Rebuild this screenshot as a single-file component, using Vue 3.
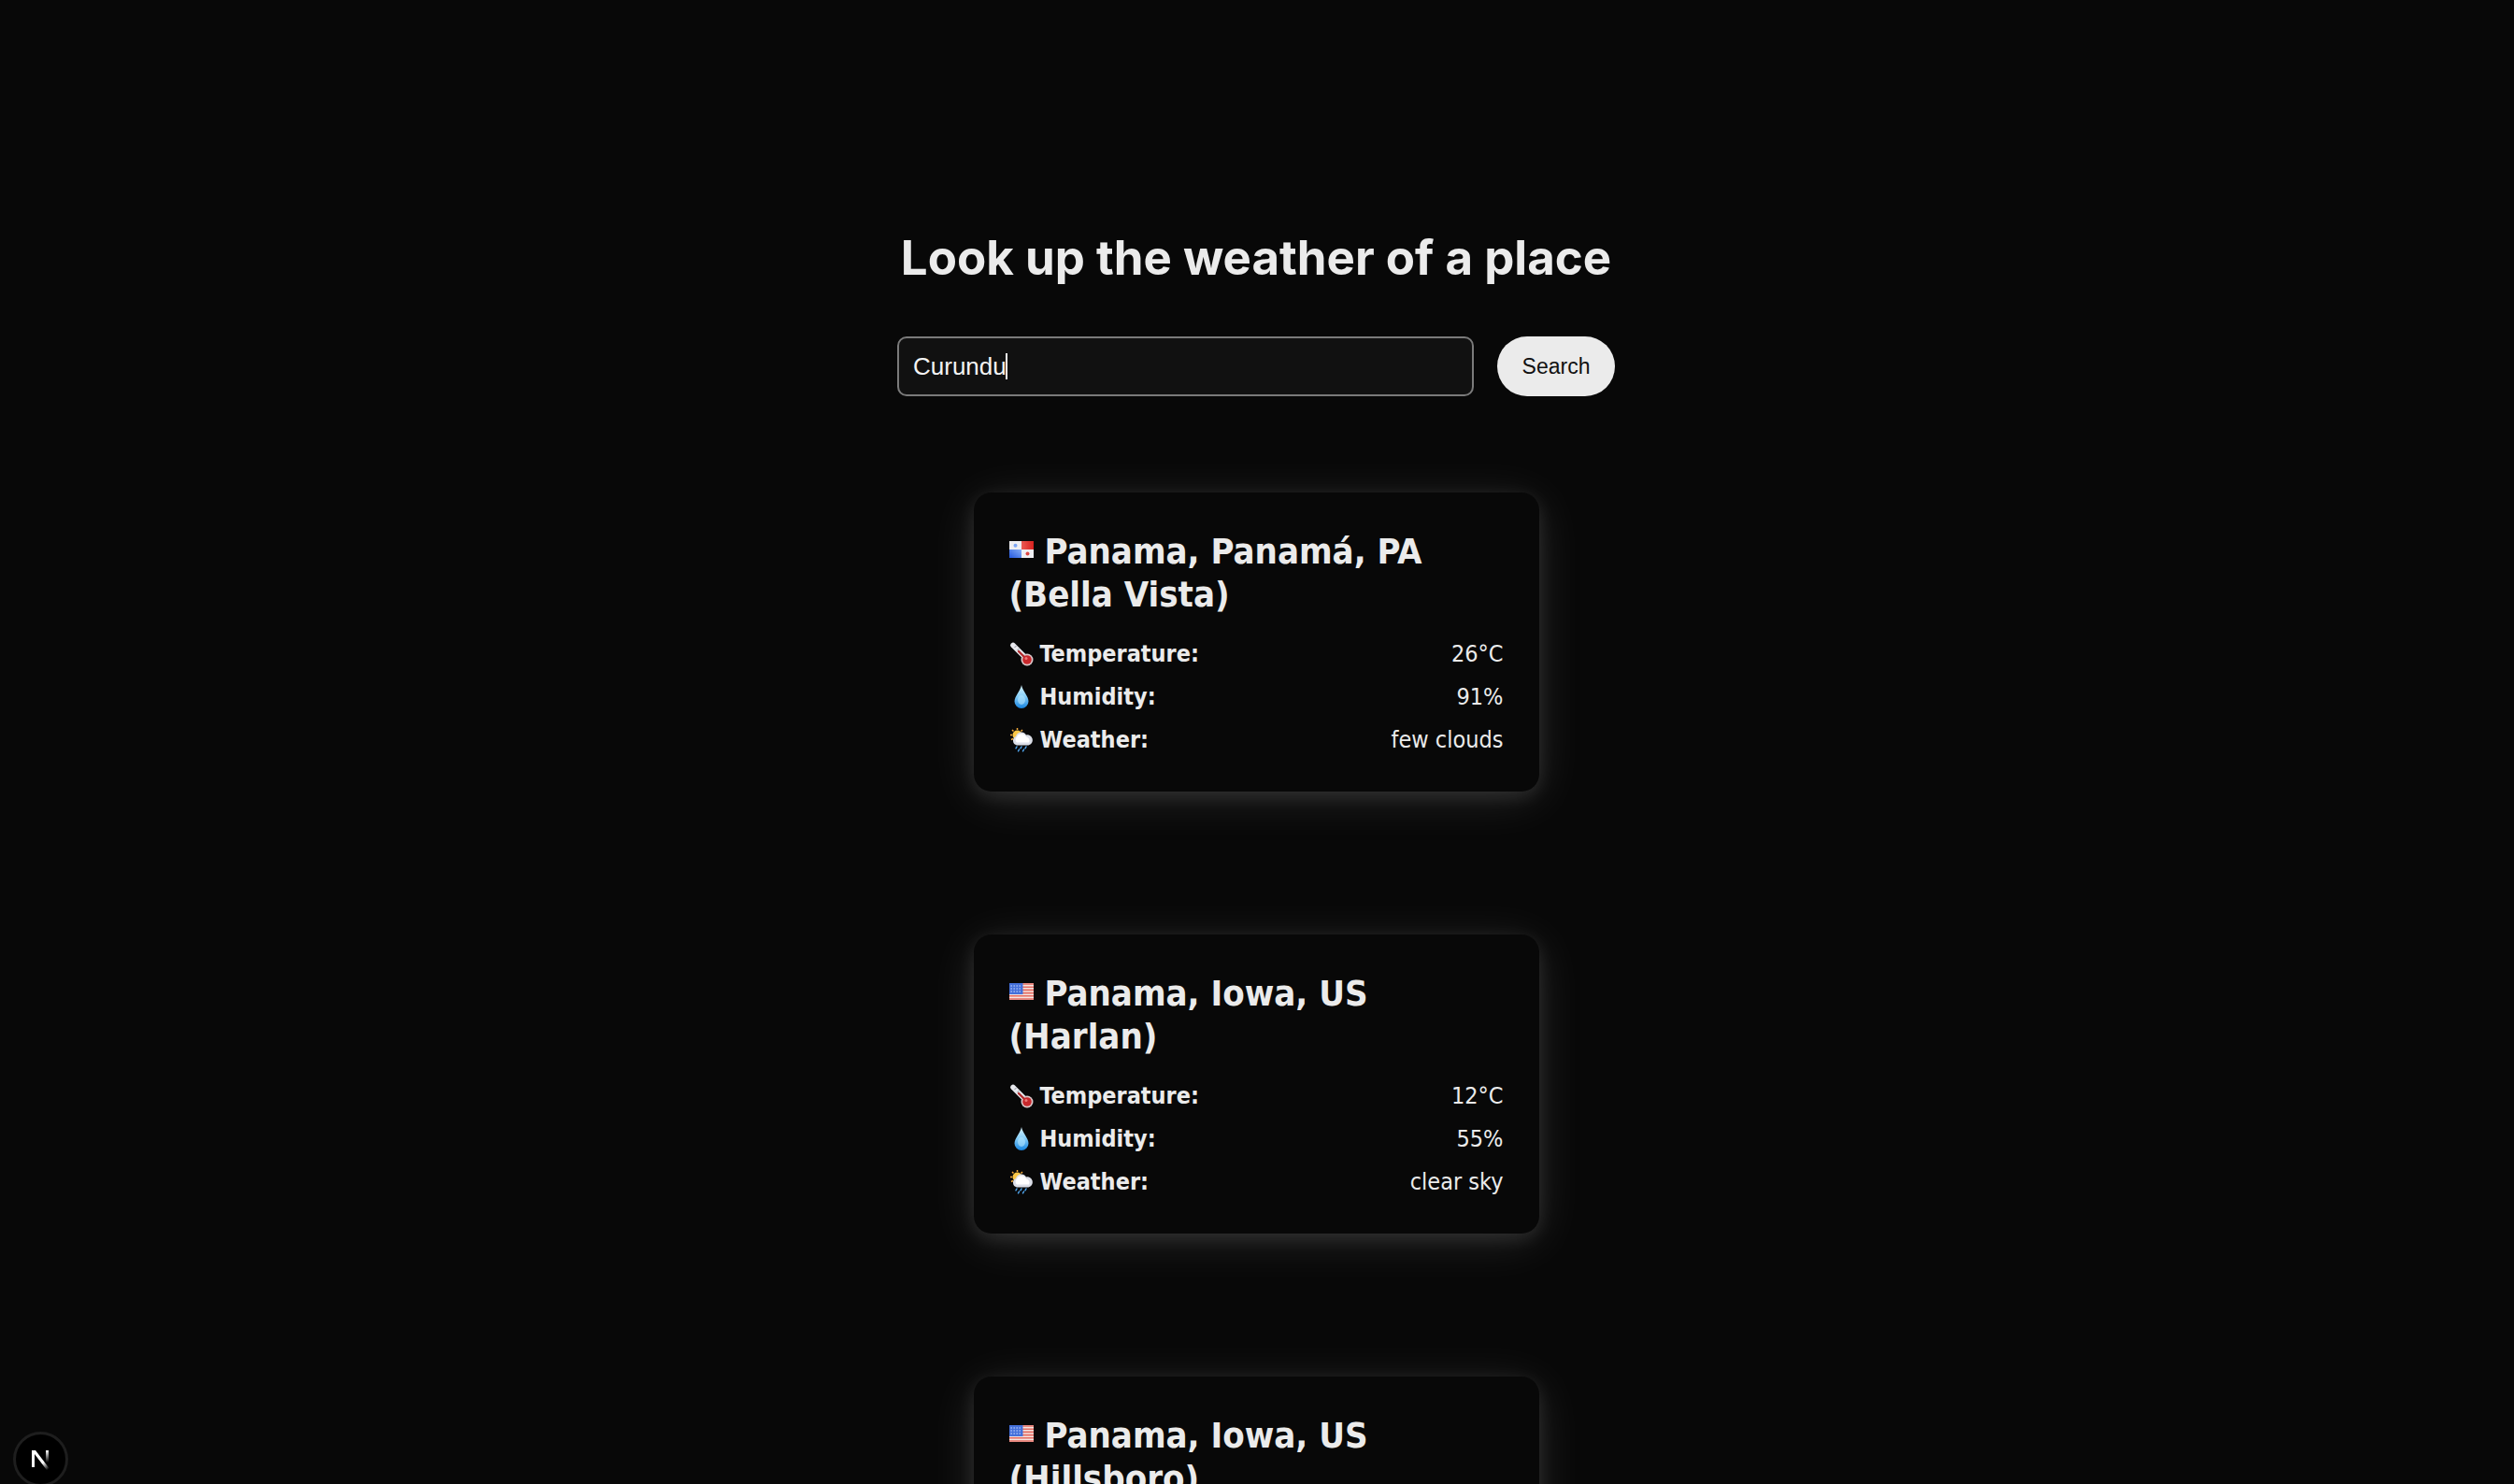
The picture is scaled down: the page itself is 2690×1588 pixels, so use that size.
<script setup>
import { onMounted, ref } from 'vue'

const query = ref('Curundu')
const field = ref(null)

const places = [
  { flag: 'pa', name: 'Panama, Panamá, PA (Bella Vista)', temperature: '26°C', humidity: '91%', weather: 'few clouds' },
  { flag: 'us', name: 'Panama, Iowa, US (Harlan)', temperature: '12°C', humidity: '55%', weather: 'clear sky' },
  { flag: 'us', name: 'Panama, Iowa, US (Hillsboro)', temperature: '14°C', humidity: '58%', weather: 'clear sky' },
]

onMounted(() => {
  field.value.focus()
})
</script>

<template>
  <div class="page">
    <main class="content">
      <h1 class="title">Look up the weather of a place</h1>
      <form class="search" @submit.prevent>
        <div class="search-field">
          <input ref="field" v-model="query" class="search-input" type="text" aria-label="Place" />
          <span class="caret" aria-hidden="true"></span>
        </div>
        <button class="search-button" type="submit">Search</button>
      </form>

      <section class="cards">
        <article v-for="place in places" :key="place.name" class="card">
          <h2 class="card-title">
            <svg v-if="place.flag === 'pa'" class="flag" viewBox="0 0 26 18" aria-hidden="true">
              <defs>
                <linearGradient id="red-field" x1="0" y1="0" x2="1" y2="0">
                  <stop offset="0" stop-color="#ea5a54" />
                  <stop offset="1" stop-color="#d9221f" />
                </linearGradient>
                <linearGradient id="blue-field" x1="0" y1="1" x2="1" y2="0">
                  <stop offset="0" stop-color="#2458e0" />
                  <stop offset="1" stop-color="#86aef6" />
                </linearGradient>
              </defs>
              <rect width="26" height="18" fill="#eeeef2" />
              <rect x="13" width="13" height="9" fill="url(#red-field)" />
              <rect y="9" width="13" height="9" fill="url(#blue-field)" />
              <circle cx="6.500" cy="4.800" r="2" fill="#7da6f4" />
              <circle cx="19.500" cy="13.500" r="2" fill="#dc4642" />
            </svg>
            <svg v-else class="flag" viewBox="0 0 26 18" aria-hidden="true">
              <rect width="26" height="18" fill="#f6e4df" />
              <path d="M0 1h26M0 4.200h26M0 7.400h26M0 10.600h26M0 13.800h26M0 17h26" stroke="#e36a60" stroke-width="1.600" />
              <rect width="14.500" height="12" fill="#4470da" />
              <path d="M1.500 3h12M1.500 6h12M1.500 9h12" stroke="#a9c0f6" stroke-width="1.400" stroke-dasharray="1.400 1.600" />
            </svg>
            {{ place.name }}
          </h2>
          <dl class="facts">
            <div class="fact">
              <dt>
                <svg class="icon" viewBox="0 0 26 26" aria-hidden="true">
                  <path d="M4 3.500L18 17.500" stroke="#e8e9ee" stroke-width="5.500" stroke-linecap="round" />
                  <circle cx="19" cy="19" r="6.500" fill="#d9c9cb" />
                  <path d="M10 10L18 18" stroke="#b02a2c" stroke-width="2.400" stroke-linecap="round" />
                  <circle cx="19" cy="19" r="4.800" fill="#c8282c" />
                  <circle cx="18" cy="17.500" r="1.500" fill="#ee7a78" />
                  <path d="M7.500 4l-2 2M10.500 7l-2 2" stroke="#8d919b" stroke-width="1" />
                </svg>
                Temperature:
              </dt>
              <dd>{{ place.temperature }}</dd>
            </div>
            <div class="fact">
              <dt>
                <svg class="icon" viewBox="0 0 26 26" aria-hidden="true">
                  <defs>
                    <linearGradient id="drop" x1="0" y1="0" x2="0" y2="1">
                      <stop offset="0" stop-color="#d8f2ff" />
                      <stop offset=".45" stop-color="#8ed3fa" />
                      <stop offset="1" stop-color="#1684e0" />
                    </linearGradient>
                  </defs>
                  <path d="M13 0C14 6 20.500 12 20.500 17.500a7.500 7.500 0 0 1-15 0C5.500 12 12 6 13 0z" fill="url(#drop)" />
                  <ellipse cx="13" cy="16" rx="4" ry="5" fill="#b4e6ff" opacity=".6" />
                </svg>
                Humidity:
              </dt>
              <dd>{{ place.humidity }}</dd>
            </div>
            <div class="fact">
              <dt>
                <svg class="icon" viewBox="0 0 26 26" aria-hidden="true">
                  <path d="M8.500 0v2M3 2l1.500 1.500M1 7.500h2M14 2l-1.500 1.500M2 12.500l2-1" stroke="#f2a93a" stroke-width="1.500" />
                  <circle cx="8.500" cy="7.500" r="5" fill="#fbc746" />
                  <path d="M8 18.500a5 5 0 0 1-1-9.500 6 6 0 0 1 11-1.500 5.600 5.600 0 0 1 2.500 11z" fill="#dcdfe8" />
                  <path d="M8 15.500a4 4 0 0 1 0-6 5.500 5.500 0 0 1 10 0 4 4 0 0 1 3 6z" fill="#fff" />
                  <path d="M8 20l-1 1.800M13 20l-1 1.800M18 20l-1 1.800M10.500 23l-1 1.800M15.500 23l-1 1.800" stroke="#4fa3ea" stroke-width="1.500" stroke-linecap="round" />
                </svg>
                Weather:
              </dt>
              <dd>{{ place.weather }}</dd>
            </div>
          </dl>
        </article>
      </section>
    </main>

    <button class="dev-badge" type="button" aria-label="Open developer tools">
      <svg viewBox="0 0 20 20" aria-hidden="true">
        <defs>
          <linearGradient id="stem" x1="0" y1="0" x2="0" y2="1">
            <stop offset="0" stop-color="#fff" />
            <stop offset="1" stop-color="#fff" stop-opacity="0" />
          </linearGradient>
          <linearGradient id="diagonal" gradientUnits="userSpaceOnUse" x1="12" y1="13" x2="18" y2="20">
            <stop offset="0" stop-color="#fff" />
            <stop offset="1" stop-color="#fff" stop-opacity="0" />
          </linearGradient>
        </defs>
        <path d="M0 0h4l16 21h-4L3 4v14H0z" fill="url(#diagonal)" />
        <rect x="15" width="3" height="13" fill="url(#stem)" />
      </svg>
    </button>
  </div>
</template>

<style>
html,
body {
  height: 100%;
  background: #080808;
}
#app {
  height: 100%;
}
</style>

<style scoped>
.page {
  box-sizing: border-box;
  height: 100%;
  padding-right: 2px;
  overflow: hidden;
  background: #080808;
  color: #ebebeb;
  font-family: "DejaVu Sans Condensed", "DejaVu Sans", sans-serif;
}
.content {
  display: flex;
  flex-direction: column;
  align-items: center;
  width: fit-content;
  margin: 0 auto;
  padding-top: 244px;
}
.title {
  margin: 0;
  font: 700 51px/64px Inter, sans-serif;
  white-space: nowrap;
}
.search {
  display: flex;
  gap: 25px;
  width: 768px;
  margin-top: 52px;
}
.search-field {
  position: relative;
  flex: 1;
}
.search-input {
  box-sizing: border-box;
  width: 100%;
  height: 64px;
  padding: 0 15px;
  border: 2px solid #7a7a7a;
  border-radius: 10px;
  outline: none;
  background: #111;
  color: #f4f4f4;
  caret-color: transparent;
  font: 26px "Liberation Sans", sans-serif;
}
.caret {
  position: absolute;
  top: 18px;
  left: 116px;
  width: 2px;
  height: 28px;
  background: #f4f4f4;
}
.search-button {
  width: 126px;
  height: 64px;
  padding: 0;
  border: 0;
  border-radius: 32px;
  background: #ebebeb;
  color: #111;
  font: 23px "Liberation Sans", sans-serif;
}
.cards {
  display: flex;
  flex-direction: column;
  gap: 153px;
  width: 605px;
  margin-top: 103px;
}
.card {
  box-sizing: border-box;
  padding: 40px 38px 32px;
  border-radius: 19px;
  background: #080808;
  box-shadow: 0 5px 20px rgba(255, 255, 255, 0.1), 0 8px 52px rgba(255, 255, 255, 0.12);
}
.card-title {
  margin: 0;
  font-size: 38px;
  font-weight: 700;
  line-height: 46px;
}
.flag {
  width: 26px;
  height: 18px;
  vertical-align: 6px;
}
.facts {
  display: flex;
  flex-direction: column;
  margin: 18px 0 0;
}
.fact {
  display: flex;
  justify-content: space-between;
  font-size: 25px;
  line-height: 46px;
}
.fact dt {
  display: flex;
  align-items: center;
  gap: 7px;
  font-weight: 700;
}
.fact dd {
  margin: 0;
}
.icon {
  width: 26px;
  height: 26px;
}
.dev-badge {
  position: fixed;
  left: 14px;
  bottom: -3px;
  display: flex;
  align-items: center;
  justify-content: center;
  width: 59px;
  height: 59px;
  padding: 0;
  border: 3px solid #1e1e1e;
  border-radius: 50%;
  background: #000;
}
.dev-badge svg {
  width: 20px;
  height: 20px;
  overflow: visible;
}
</style>
